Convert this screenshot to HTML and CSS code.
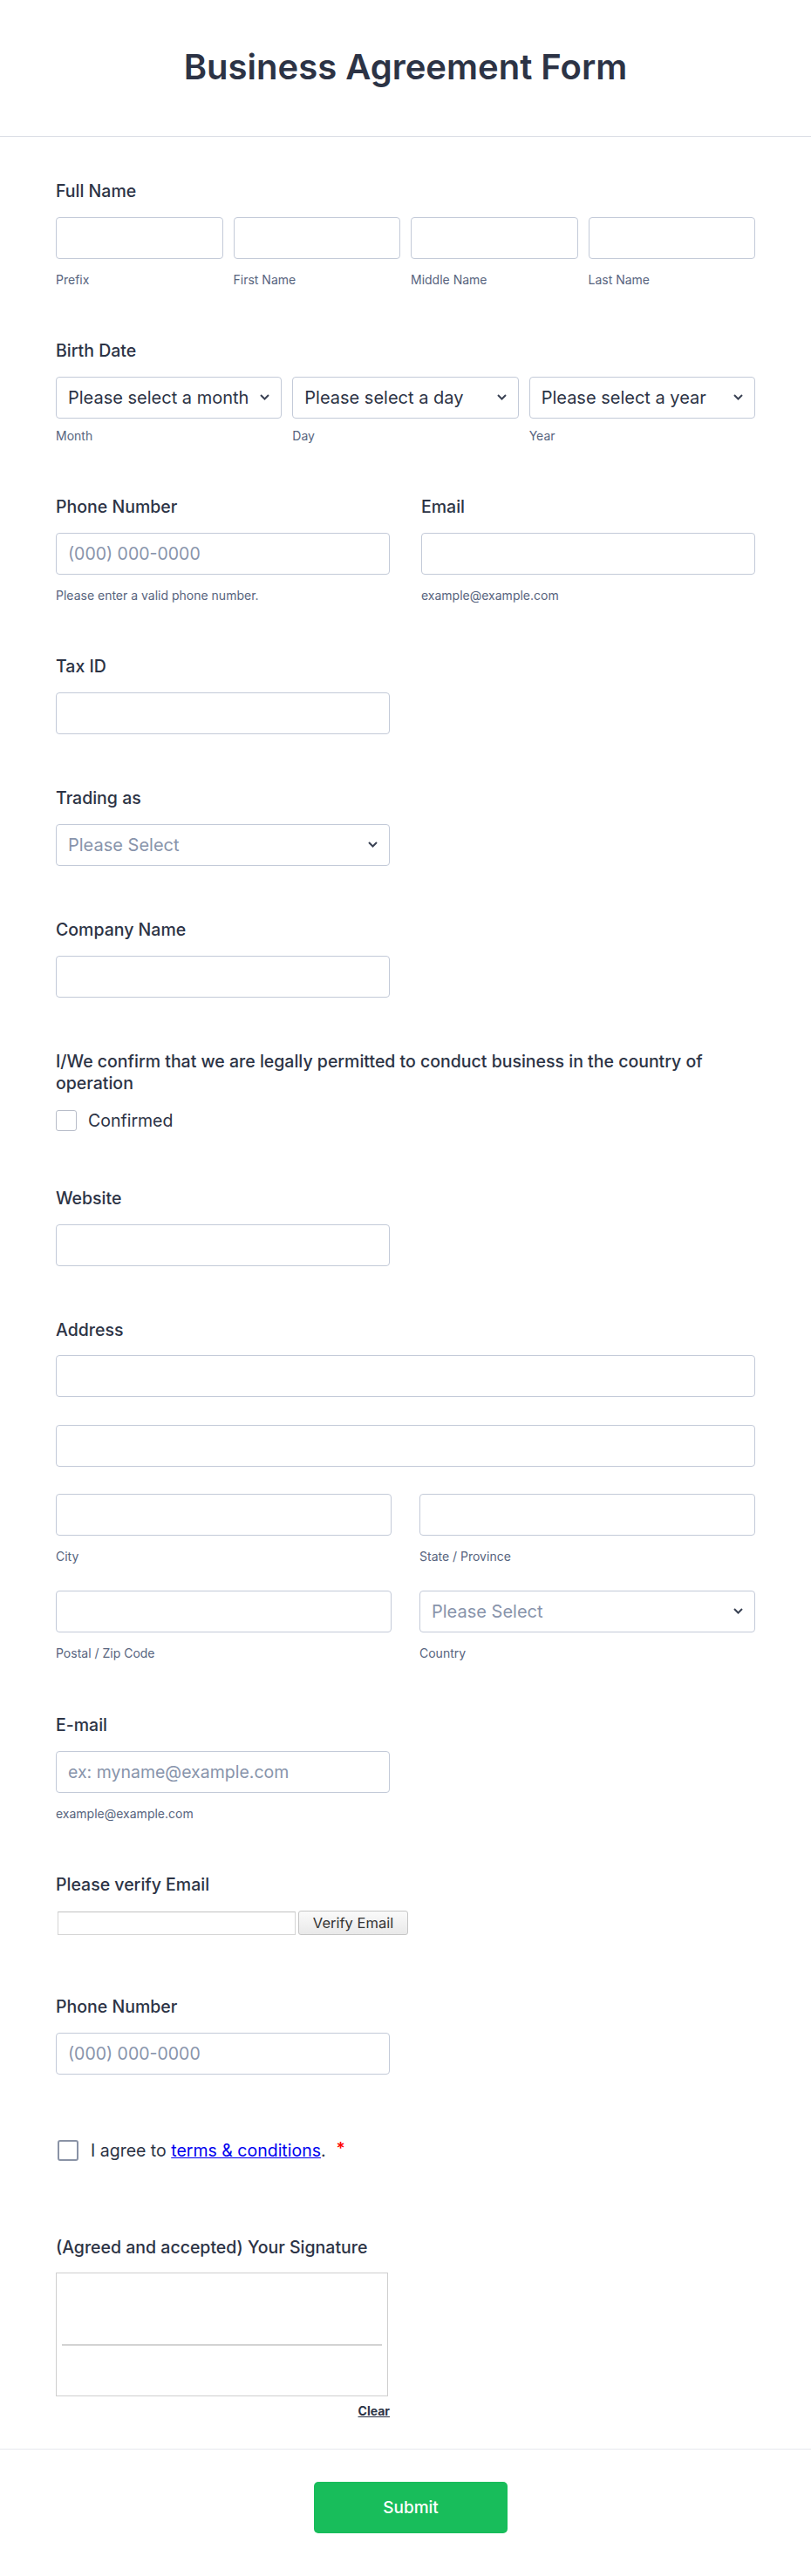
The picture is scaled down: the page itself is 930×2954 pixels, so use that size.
FILE: index.html
```html
<!DOCTYPE html>
<html lang="en">

<head>
    <meta charset="UTF-8">
    <meta name="viewport" content="width=device-width, initial-scale=1.0">
    <title>Business Agreement Form</title>
    <link rel="stylesheet" href="styles.css">
</head>

<body>
    <form class="form" action="#" method="post">
        <div class="form-header">
            <h1>Business Agreement Form</h1>
        </div>

        <div class="form-body">
            <div class="field">
                <label class="field-label">Full Name</label>
                <div class="grid-4">
                    <div>
                        <input type="text" class="text-input" name="prefix">
                        <span class="sublabel">Prefix</span>
                    </div>
                    <div>
                        <input type="text" class="text-input" name="first_name">
                        <span class="sublabel">First Name</span>
                    </div>
                    <div>
                        <input type="text" class="text-input" name="middle_name">
                        <span class="sublabel">Middle Name</span>
                    </div>
                    <div>
                        <input type="text" class="text-input" name="last_name">
                        <span class="sublabel">Last Name</span>
                    </div>
                </div>
            </div>

            <div class="field">
                <label class="field-label">Birth Date</label>
                <div class="grid-3 date-row">
                    <div>
                        <div class="select-box">
                            <select name="month">
                                <option>Please select a month</option>
                            </select>
                            <svg class="chevron" viewBox="0 0 11 7"><polyline points="1,1 5.5,5.5 10,1"/></svg>
                        </div>
                        <span class="sublabel">Month</span>
                    </div>
                    <div>
                        <div class="select-box">
                            <select name="day">
                                <option>Please select a day</option>
                            </select>
                            <svg class="chevron" viewBox="0 0 11 7"><polyline points="1,1 5.5,5.5 10,1"/></svg>
                        </div>
                        <span class="sublabel">Day</span>
                    </div>
                    <div>
                        <div class="select-box">
                            <select name="year">
                                <option>Please select a year</option>
                            </select>
                            <svg class="chevron" viewBox="0 0 11 7"><polyline points="1,1 5.5,5.5 10,1"/></svg>
                        </div>
                        <span class="sublabel">Year</span>
                    </div>
                </div>
            </div>

            <div class="field field-pair">
                <div>
                    <label class="field-label">Phone Number</label>
                    <input type="tel" class="text-input" name="phone" placeholder="(000) 000-0000">
                    <span class="sublabel">Please enter a valid phone number.</span>
                </div>
                <div>
                    <label class="field-label">Email</label>
                    <input type="email" class="text-input" name="email">
                    <span class="sublabel">example@example.com</span>
                </div>
            </div>

            <div class="field field-tight">
                <label class="field-label">Tax ID</label>
                <div class="half">
                    <input type="text" class="text-input" name="tax_id">
                </div>
            </div>

            <div class="field field-tight">
                <label class="field-label">Trading as</label>
                <div class="half select-box">
                    <select name="trading_as" class="is-empty">
                        <option>Please Select</option>
                    </select>
                    <svg class="chevron" viewBox="0 0 11 7"><polyline points="1,1 5.5,5.5 10,1"/></svg>
                </div>
            </div>

            <div class="field field-tight">
                <label class="field-label">Company Name</label>
                <div class="half">
                    <input type="text" class="text-input" name="company">
                </div>
            </div>

            <div class="field field-confirm">
                <label class="field-label long-label">I/We confirm that we are legally permitted to conduct business in the country of operation</label>
                <div class="check-row">
                    <input type="checkbox" class="check" name="confirmed">
                    <span>Confirmed</span>
                </div>
            </div>

            <div class="field field-tight">
                <label class="field-label">Website</label>
                <div class="half">
                    <input type="text" class="text-input" name="website">
                </div>
            </div>

            <div class="field field-tight">
                <label class="field-label address-label">Address</label>
                <div class="address">
                    <input type="text" class="text-input wide" name="street1">
                    <input type="text" class="text-input wide" name="street2">
                    <div>
                        <input type="text" class="text-input" name="city">
                        <span class="sublabel">City</span>
                    </div>
                    <div>
                        <input type="text" class="text-input" name="state">
                        <span class="sublabel">State / Province</span>
                    </div>
                    <div>
                        <input type="text" class="text-input" name="postal">
                        <span class="sublabel">Postal / Zip Code</span>
                    </div>
                    <div>
                        <div class="select-box">
                            <select name="country" class="is-empty">
                                <option>Please Select</option>
                            </select>
                            <svg class="chevron" viewBox="0 0 11 7"><polyline points="1,1 5.5,5.5 10,1"/></svg>
                        </div>
                        <span class="sublabel">Country</span>
                    </div>
                </div>
            </div>

            <div class="field">
                <label class="field-label">E-mail</label>
                <div class="half">
                    <input type="email" class="text-input" name="email2" placeholder="ex: myname@example.com">
                    <span class="sublabel">example@example.com</span>
                </div>
            </div>

            <div class="field field-verify">
                <label class="field-label">Please verify Email</label>
                <div class="verify">
                    <input type="text" class="verify-input" name="verify_code">
                    <button type="button" class="verify-button">Verify Email</button>
                </div>
            </div>

            <div class="field field-phone">
                <label class="field-label">Phone Number</label>
                <div class="half">
                    <input type="tel" class="text-input" name="phone2" placeholder="(000) 000-0000">
                </div>
            </div>

            <div class="field field-agree">
                <div class="check-row">
                    <input type="checkbox" class="check check-dark" name="terms">
                    <span>I agree to <a href="#">terms &amp; conditions</a>.</span>
                    <span class="required">*</span>
                </div>
            </div>

            <div class="field field-last">
                <label class="field-label signature-label">(Agreed and accepted) Your Signature</label>
                <div class="signature">
                    <div class="signature-pad">
                        <div class="signature-line"></div>
                    </div>
                    <div class="signature-actions">
                        <a href="#" class="clear-link">Clear</a>
                    </div>
                </div>
            </div>
        </div>

        <div class="form-footer">
            <button type="submit" class="submit-button">Submit</button>
        </div>
    </form>
</body>

</html>
```

FILE: styles.css
```css
* {
    margin: 0;
    padding: 0;
    box-sizing: border-box;
}

body {
    font-family: Inter, "Noto Sans", sans-serif;
    color: #2c3345;
    background-color: #fff;
}

.form-header {
    padding: 53px 0 55px;
    border-bottom: 1px solid #dcdfe6;
    text-align: center;
}

.form-header h1 {
    font-size: 40px;
    line-height: 48px;
    font-weight: 600;
    color: #2c3345;
}

.form-body {
    padding: 50px 64px 34px;
}

.field {
    margin-bottom: 60px;
}

.field-tight {
    margin-bottom: 61px;
}

.field-label {
    display: block;
    font-size: 19.5px;
    line-height: 24px;
    font-weight: 500;
    margin-bottom: 18px;
}

.long-label {
    line-height: 25px;
    padding-right: 30px;
}

.address-label {
    margin-bottom: 17px;
}

.sublabel {
    display: block;
    font-size: 14px;
    line-height: 18px;
    color: #57647e;
    margin-top: 15px;
}

.date-row .sublabel {
    margin-top: 11px;
}

.half {
    width: 383px;
}

.grid-4 {
    display: grid;
    grid-template-columns: repeat(4, 1fr);
    column-gap: 12px;
}

.grid-3 {
    display: grid;
    grid-template-columns: repeat(3, 1fr);
    column-gap: 12px;
}

.field-pair {
    display: grid;
    grid-template-columns: 1fr 1fr;
    column-gap: 36px;
}

.text-input,
.select-box select {
    display: block;
    width: 100%;
    height: 48px;
    padding: 0 13px;
    border: 1px solid #c3cad8;
    border-radius: 4px;
    background-color: #fff;
    font-family: inherit;
    font-size: 19.5px;
    color: #2c3345;
    outline: none;
}

.text-input::placeholder {
    color: #8894ab;
}

.select-box {
    position: relative;
}

.select-box select {
    appearance: none;
    -webkit-appearance: none;
    padding-right: 34px;
    font-size: 20px;
}

.select-box select.is-empty {
    color: #8894ab;
}

.chevron {
    position: absolute;
    top: 50%;
    right: 14px;
    width: 11px;
    height: 7px;
    margin-top: -4px;
    fill: none;
    stroke: #3a4254;
    stroke-width: 2;
    pointer-events: none;
}

.check-row {
    display: flex;
    align-items: center;
    height: 24px;
    font-size: 19.5px;
}

.check {
    appearance: none;
    -webkit-appearance: none;
    width: 24px;
    height: 24px;
    margin-right: 13px;
    border: 1px solid #b8bdc9;
    border-radius: 3px;
    background-color: #fff;
    flex-shrink: 0;
}

.check-dark {
    border: 2px solid #8a93a6;
    margin-left: 2px;
    margin-right: 14px;
}

.field-confirm {
    margin-bottom: 65px;
}

.address {
    display: grid;
    grid-template-columns: 1fr 1fr;
    column-gap: 32px;
}

.address .wide {
    grid-column: 1 / 3;
    margin-bottom: 32px;
}

.address .wide + .wide {
    margin-bottom: 31px;
}

.address div:nth-child(3),
.address div:nth-child(4) {
    margin-bottom: 30px;
}

.field-verify {
    margin-bottom: 70px;
}

.verify {
    display: flex;
    align-items: flex-start;
    padding-left: 2px;
}

.verify-input {
    width: 273px;
    height: 27px;
    margin-top: 1px;
    border: 1px solid #d4d4d4;
    border-top-color: #c2c2c2;
    background-color: #fff;
    outline: none;
}

.verify-button {
    width: 126px;
    height: 28px;
    margin-left: 3px;
    border: 1px solid #c6c6c6;
    border-radius: 3px;
    background: linear-gradient(#fafafa, #e9e9e9);
    font-family: inherit;
    font-size: 16.5px;
    color: #333;
    cursor: pointer;
}

.field-phone {
    margin-bottom: 75px;
}

.field-agree {
    margin-bottom: 87px;
}

.field-agree a {
    color: #0000ee;
    text-decoration: underline;
}

.required {
    align-self: flex-start;
    margin-left: 12px;
    margin-top: -2px;
    color: #f00;
    font-size: 19px;
    font-weight: 600;
}

.field-last {
    margin-bottom: 0;
}

.signature-label {
    margin-bottom: 17px;
}

.signature {
    width: 383px;
}

.signature-pad {
    width: 381px;
    height: 142px;
    padding: 81px 6px 0;
    border: 1px solid #cfcfcf;
}

.signature-line {
    height: 2px;
    background-color: #d3d3d3;
}

.signature-actions {
    margin-top: 6px;
    text-align: right;
}

.clear-link {
    font-size: 14px;
    line-height: 18px;
    font-weight: 700;
    color: #2c3345;
    text-decoration: underline;
}

.form-footer {
    padding: 37px 0 50px;
    border-top: 1px solid #e6e8ee;
    text-align: center;
}

.submit-button {
    width: 222px;
    height: 59px;
    margin-left: 12px;
    border: none;
    border-radius: 5px;
    background-color: #18bd5b;
    font-family: inherit;
    font-size: 19px;
    font-weight: 500;
    color: #fff;
    cursor: pointer;
}
```
